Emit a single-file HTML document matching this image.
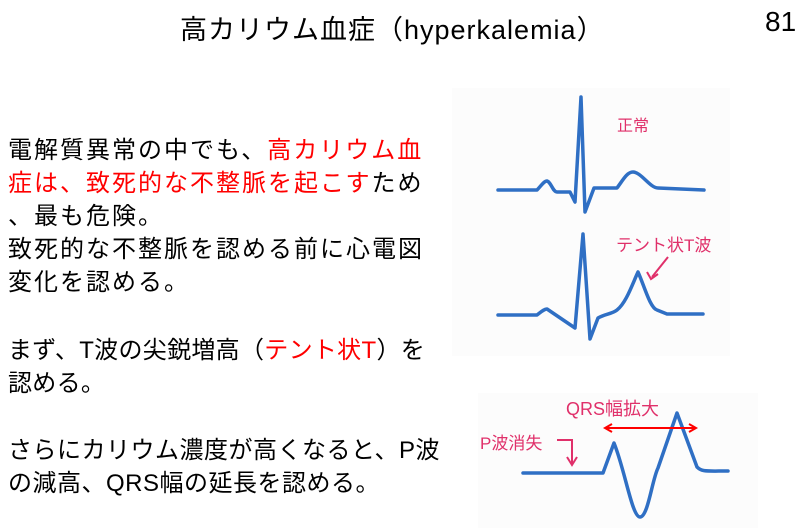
<!DOCTYPE html>
<html><head><meta charset="utf-8"><style>
body{margin:0;width:807px;height:528px;background:#fff;position:relative;overflow:hidden;font-family:"Liberation Sans","Noto Sans CJK JP",sans-serif;}
.t{position:absolute;white-space:nowrap;color:#000;}
.r{color:#f00;}
.body{left:8px;font-size:24px;letter-spacing:2px;line-height:33px;}
.pk{color:#e0306a;position:absolute;white-space:nowrap;}
</style></head><body>
<div class="t" style="left:180px;top:8px;font-size:27px;letter-spacing:1px;">高カリウム血症（hyperkalemia）</div>
<div class="t" style="left:765px;top:6px;font-size:28px;">81</div>
<div class="t body" style="top:134px;">電解質異常の中でも、<span class="r">高カリウム血</span><br><span class="r">症は、致死的な不整脈を起こす</span>ため<br>、最も危険。<br>致死的な不整脈を認める前に心電図<br>変化を認める。</div>
<div class="t body" style="top:334px;letter-spacing:0.3px;">まず、T波の尖鋭増高（<span class="r">テント状T</span>）を<br>認める。</div>
<div class="t body" style="top:434px;letter-spacing:0.5px;">さらにカリウム濃度が高くなると、P波<br>の減高、QRS幅の延長を認める。</div>
<div style="position:absolute;left:452px;top:88px;width:278px;height:268px;background:#fcfcfc;"></div>
<div style="position:absolute;left:478px;top:393px;width:280px;height:135px;background:#fcfcfc;"></div>
<svg width="807" height="528" style="position:absolute;left:0;top:0" fill="none">
<g stroke="#2f6fc4" stroke-width="3.5" stroke-linejoin="round" stroke-linecap="round">
<path d="M498,190 L537,190 C541,186 544,181 547,181 C551,182 553,192 557,192 L570,192 L575,202 L581,97 L585,212 L594,188 L617,188 C623,180 627,172 633,172 C641,172 650,188 658,188 L704,190"/>
<path d="M498,315 L537,315 C541,312 544,309 547,309 L575,328 L583,234 L590,339 L598,318 C605,314 612,314 617,310 C626,303 632,285 638,272 C644,285 650,308 657,310 L667,314 L703,314"/>
<path d="M523,473 L603,473 L614,443 C625,470 632,517 640,517 C648,517 652,480 658,468 L677,413 L697,467 C702,472 706,471 728,471"/>
</g>
<g stroke="#e0306a" stroke-width="2" fill="none">
<line x1="668" y1="257" x2="652" y2="277"/>
<polyline points="647,272 651,279 658,274" />
<polyline points="557,440 572,440 572,463"/>
<polyline points="567,457 572,465 577,457"/>
</g>
<g stroke="#f00" stroke-width="2">
<line x1="606" y1="428" x2="695" y2="428"/>
<polyline points="612,424 605,428 612,432"/>
<polyline points="689,424 696,428 689,432"/>
</g>
</svg>
<div class="pk" style="left:617px;top:112px;font-size:16px;">正常</div>
<div class="pk" style="left:616px;top:231px;font-size:17px;">テント状T波</div>
<div class="pk" style="left:566px;top:395px;font-size:18px;">QRS幅拡大</div>
<div class="pk" style="left:480px;top:429px;font-size:17px;">P波消失</div>
</body></html>
